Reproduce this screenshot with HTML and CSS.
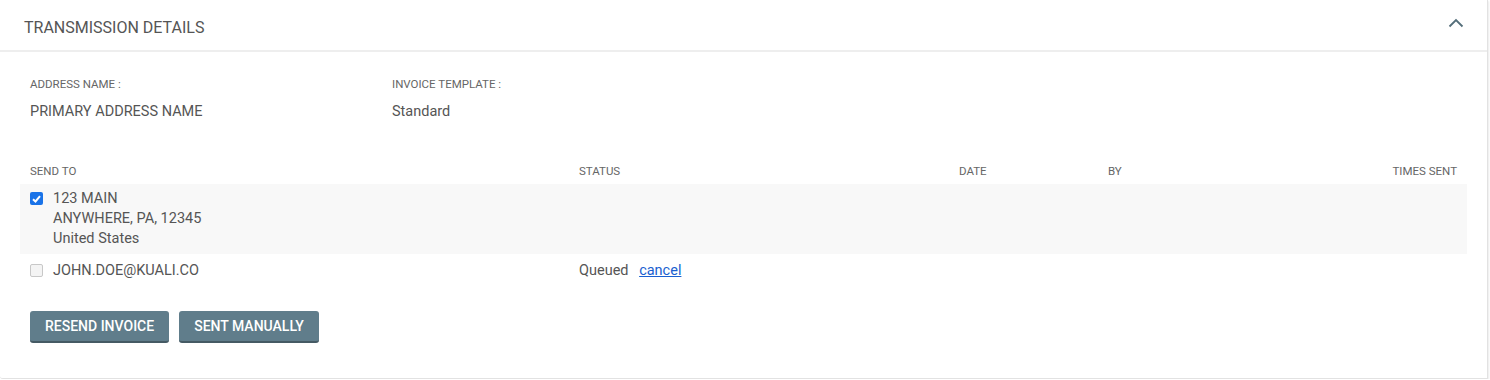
FILE: index.html
```html
<!DOCTYPE html>
<html lang="en">
<head>
  <meta charset="UTF-8">
  <title>Transmission Details</title>
  <link rel="stylesheet" href="styles.css">
</head>
<body>
  <div class="card">
    <div class="card-header">
      <h2>TRANSMISSION DETAILS</h2>
      <svg class="chevron" width="16" height="10" viewBox="0 0 16 10">
        <path d="M1.5 8.5 L8 2 L14.5 8.5" fill="none" stroke="#546e7a" stroke-width="1.8"/>
      </svg>
    </div>
    <div class="card-body">
      <div class="info">
        <div class="field">
          <div class="label">ADDRESS NAME :</div>
          <div class="value">PRIMARY ADDRESS NAME</div>
        </div>
        <div class="field">
          <div class="label">INVOICE TEMPLATE :</div>
          <div class="value">Standard</div>
        </div>
      </div>

      <div class="table">
        <div class="row head">
          <div>SEND TO</div>
          <div>STATUS</div>
          <div>DATE</div>
          <div>BY</div>
          <div class="right">TIMES SENT</div>
        </div>
        <div class="row shaded">
          <div class="send">
            <span class="check on">
              <svg width="9" height="8" viewBox="0 0 9 8"><path d="M1 4.2 L3.5 6.5 L8 1.2" fill="none" stroke="#fff" stroke-width="2"/></svg>
            </span>
            <div>123 MAIN<br>ANYWHERE, PA, 12345<br>United States</div>
          </div>
          <div></div>
          <div></div>
          <div></div>
          <div></div>
        </div>
        <div class="row">
          <div class="send">
            <span class="check off"></span>
            <div>JOHN.DOE@KUALI.CO</div>
          </div>
          <div>Queued <a href="#" class="cancel">cancel</a></div>
          <div></div>
          <div></div>
          <div></div>
        </div>
      </div>

      <div class="actions">
        <button class="btn">RESEND INVOICE</button>
        <button class="btn">SENT MANUALLY</button>
      </div>
    </div>
  </div>
</body>
</html>
```

FILE: styles.css
```css
body {
  margin: 0;
  font-family: Roboto, "Liberation Sans", sans-serif;
  color: #555;
  background: #fff;
}

.card {
  width: 1488px;
  height: 379px;
  background: #fff;
  border-right: 1px solid #e2e2e2;
  border-bottom: 1px solid #e2e2e2;
  border-bottom-left-radius: 3px;
  box-shadow: 1px 1px 2px rgba(0,0,0,0.08);
  box-sizing: border-box;
}

.card-header {
  height: 50px;
  display: flex;
  align-items: center;
  justify-content: space-between;
  padding: 0 23px 0 24px;
  border-bottom: 2px solid #eeeeee;
}

.card-header h2 {
  margin: 0;
  font-size: 16px;
  font-weight: 400;
  color: #555;
  padding-top: 5px;
}

.chevron {
  margin-top: -5px;
}

.card-body {
  padding: 24px 20px 0 20px;
}

.info {
  display: flex;
  padding: 0 10px;
}

.field {
  width: 362px;
}

.label {
  font-size: 11.5px;
  line-height: 16px;
  color: #666;
}

.value {
  font-size: 14.5px;
  line-height: 20px;
  margin-top: 10px;
}

.table {
  margin-top: 38px;
}

.row {
  display: grid;
  grid-template-columns: 549px 380px 149px 1fr 140px;
  font-size: 14.5px;
  line-height: 20px;
}

.row > div {
  padding: 7px 10px 5px;
}

.row.head {
  font-size: 11.5px;
  line-height: 14px;
  color: #666;
}

.row.head > div {
  padding: 4px 10px 6px;
}

.row.shaded {
  background: #f8f8f8;
}

.row.shaded > div {
  padding: 5px 10px 5px;
}

.right {
  text-align: right;
}

.send {
  display: flex;
  align-items: flex-start;
  gap: 10px;
}

.check {
  width: 13px;
  height: 13px;
  margin-top: 3px;
  border-radius: 2px;
  box-sizing: border-box;
  display: flex;
  align-items: center;
  justify-content: center;
}

.check.on {
  background: #1a73e8;
}

.check.off {
  border: 1px solid #c8c8c8;
  background: #f4f4f4;
}

.cancel {
  color: #1a5fd0;
  margin-left: 7px;
}

.actions {
  display: flex;
  gap: 10px;
  padding: 25px 10px 0;
}

.btn {
  font-family: Roboto, "Liberation Sans", sans-serif;
  font-size: 14px;
  font-weight: 500;
  color: #fff;
  background: #607d8b;
  border: none;
  border-bottom: 2px solid #455a64;
  border-radius: 3px;
  height: 32px;
  padding: 0 15px;
  cursor: pointer;
}
```
